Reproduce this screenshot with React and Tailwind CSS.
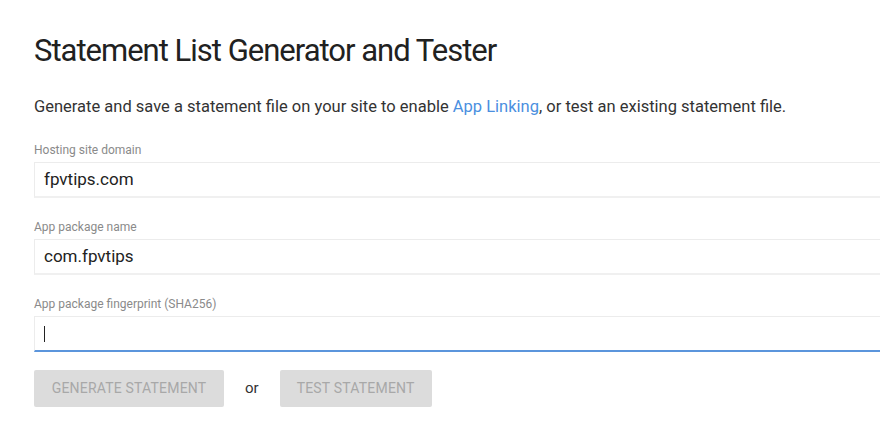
import React from 'react';

const fields = [
  { label: 'Hosting site domain', value: 'fpvtips.com' },
  { label: 'App package name', value: 'com.fpvtips' },
  { label: 'App package fingerprint (SHA256)', value: '', focused: true },
];

export default function App() {
  return (
    <div className="w-[880px] h-[433px] overflow-hidden bg-white font-['Roboto',sans-serif]">
      <div className="pl-[34px] pt-[33px]">
        <h1 className="text-[31px] leading-[36px] tracking-[-1px] text-[#212121] font-normal">
          Statement List Generator and Tester
        </h1>
        <p className="mt-[28px] text-[16.5px] leading-[20px] text-[#333]">
          Generate and save a statement file on your site to enable{' '}
          <span className="text-[#4a8fdf]">App Linking</span>, or test an existing statement file.
        </p>

        <div className="mt-[25px] flex flex-col gap-[21px]">
          {fields.map((f) => (
            <div key={f.label} className="flex flex-col">
              <label className="text-[12px] leading-[16px] text-[#8a8a8a]">{f.label}</label>
              <div
                className={`mt-[4px] w-[900px] h-[36px] flex items-center pl-[9px] border border-[#ececec] ${
                  f.focused ? 'border-b-2 border-b-[#5b95dc]' : 'border-b-2 border-b-[#f0f0f0]'
                }`}
              >
                {f.focused ? (
                  <span className="w-[1px] h-[16px] bg-[#222]" />
                ) : (
                  <span className="text-[17px] text-[#222]">{f.value}</span>
                )}
              </div>
            </div>
          ))}
        </div>

        <div className="mt-[18px] flex items-center">
          <button className="w-[190px] h-[37px] rounded-[2px] bg-[#dcdcdc] text-[14px] text-[#a8a8a8] tracking-[0.2px]">
            GENERATE STATEMENT
          </button>
          <span className="ml-[21px] mr-[21px] text-[15px] text-[#333]">or</span>
          <button className="w-[152px] h-[37px] rounded-[2px] bg-[#dcdcdc] text-[14px] text-[#a8a8a8] tracking-[0.2px]">
            TEST STATEMENT
          </button>
        </div>
      </div>
    </div>
  );
}
